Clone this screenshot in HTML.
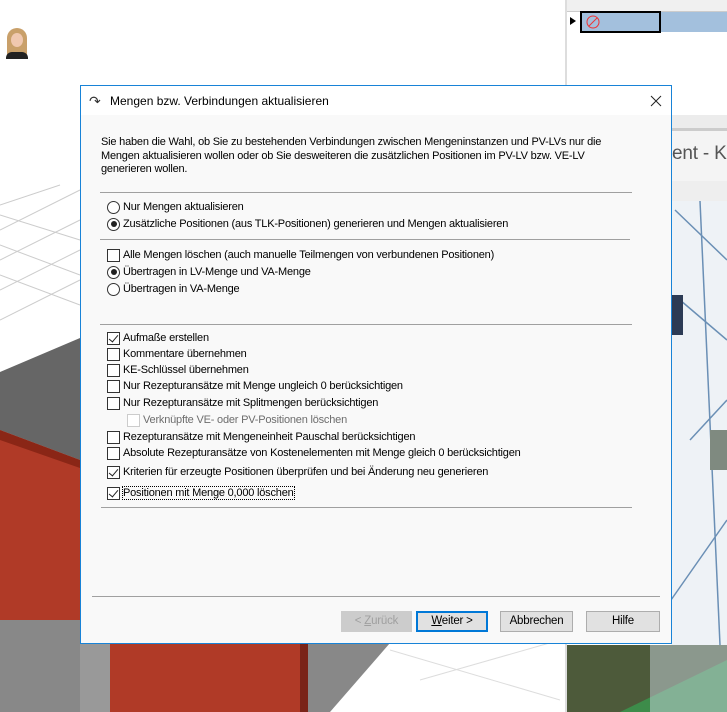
<!DOCTYPE html>
<html><head><meta charset="utf-8"><style>
*{margin:0;padding:0;box-sizing:border-box}
body{width:727px;height:712px;position:relative;overflow:hidden;background:#fff;font-family:"Liberation Sans",sans-serif;font-size:11px;letter-spacing:-0.2px;color:#000}
.a{position:absolute}
.sep{position:absolute;height:1px;background:#a0a0a0}
.row{position:absolute;left:107px;height:14px;display:flex;align-items:center;white-space:nowrap}
.cb{width:13px;height:13px;border:1px solid #333;background:#fff;margin-right:3px;position:relative;flex:none}
.cb.c::after{content:"";position:absolute;left:3px;top:0px;width:4px;height:8px;border:solid #222;border-width:0 1.5px 1.5px 0;transform:rotate(40deg)}
.rb{width:13px;height:13px;border:1px solid #333;border-radius:50%;background:#fff;margin-right:3px;position:relative;flex:none}
.rb.c::after{content:"";position:absolute;left:2.5px;top:2.5px;width:6px;height:6px;border-radius:50%;background:#222}
.btn{position:absolute;top:611px;height:21px;border:1px solid #adadad;background:#e1e1e1;text-align:center;line-height:19px;font-size:11.5px}
</style></head><body>
<svg class="a" style="left:0;top:0" width="727" height="712">
<g stroke="#ccc" stroke-width="1" fill="none">
<line x1="0" y1="230" x2="80" y2="190"/><line x1="0" y1="260" x2="80" y2="220"/><line x1="0" y1="290" x2="80" y2="250"/><line x1="0" y1="320" x2="80" y2="280"/>
<line x1="0" y1="215" x2="80" y2="240"/><line x1="0" y1="245" x2="80" y2="275"/><line x1="0" y1="275" x2="80" y2="305"/>
<line x1="0" y1="205" x2="60" y2="185"/>
</g>
<polygon points="0,372 80,338 80,460 0,430" fill="#666"/>
<polygon points="0,430 80,460 80,620 0,620" fill="#b03a27"/>
<polygon points="0,430 80,460 80,468 0,440" fill="#8a2616"/>
<polygon points="0,620 80,620 80,712 0,712" fill="#888"/>
<polygon points="80,640 300,640 300,712 80,712" fill="#b03a27"/>
<rect x="80" y="643" width="30" height="69" fill="#999"/>
<rect x="300" y="643" width="8" height="69" fill="#7a2418"/>
<polygon points="308,643 390,643 330,712 308,712" fill="#888"/>
<g stroke="#ddd"><line x1="390" y1="650" x2="560" y2="700"/><line x1="420" y1="680" x2="560" y2="640"/></g>
<rect x="565" y="0" width="2" height="712" fill="#ddd"/>
<rect x="567" y="0" width="160" height="12" fill="#f0f0f0"/>
<rect x="567" y="11" width="160" height="1" fill="#ccc"/>
<rect x="581" y="12" width="146" height="20" fill="#a3c0dd"/>
<rect x="581" y="12" width="79" height="20" fill="none" stroke="#000" stroke-width="2"/>
<circle cx="593" cy="22" r="6" fill="none" stroke="#e33" stroke-width="1"/>
<line x1="589" y1="26" x2="597" y2="18" stroke="#e33"/>
<polygon points="570,17 576,21 570,25" fill="#000"/>
<rect x="567" y="115" width="160" height="13" fill="#ececec"/>
<rect x="567" y="128" width="160" height="3" fill="#ccc"/>
<rect x="567" y="131" width="160" height="50" fill="#f4f4f4"/>
<text x="672" y="159" font-family="Liberation Sans" font-size="19" fill="#555">ent - Ko</text>
<rect x="567" y="181" width="160" height="20" fill="#eee"/>
<rect x="671" y="201" width="56" height="444" fill="#eef2f6"/>
<g stroke="#6a8fb5" stroke-width="1.5"><line x1="675" y1="210" x2="727" y2="260"/><line x1="680" y1="300" x2="727" y2="340"/><line x1="690" y1="440" x2="727" y2="400"/><line x1="671" y1="600" x2="727" y2="520"/><line x1="700" y1="201" x2="720" y2="645"/></g>
<rect x="671" y="295" width="12" height="40" fill="#2c3b55"/>
<rect x="710" y="430" width="17" height="40" fill="#7f8a80"/>
<rect x="567" y="645" width="160" height="67" fill="#4d5a3a"/>
<polygon points="620,712 727,660 727,712" fill="#3d8c4a"/>
<rect x="650" y="645" width="77" height="67" fill="#c9d6e0" opacity=".5"/>
</svg>
<div class="a" style="left:7px;top:28px;width:20px;height:30px;border-radius:10px 10px 4px 4px;background:#c9a06a"></div>
<div class="a" style="left:11px;top:33px;width:12px;height:14px;border-radius:50%;background:#f0c8b0"></div>
<div class="a" style="left:6px;top:52px;width:22px;height:7px;border-radius:6px 6px 0 0;background:#222"></div>
<div class="a" style="left:80px;top:85px;width:592px;height:559px;border:1px solid #1883d7;background:#f9f9f9"></div>
<div class="a" style="left:81px;top:86px;width:590px;height:29px;background:#fff"></div>
<div class="a" style="left:89px;top:93px;font-size:14px;color:#333">&#8631;</div>
<div class="a" style="left:110px;top:94px;font-size:12px;letter-spacing:0">Mengen bzw. Verbindungen aktualisieren</div>
<svg class="a" style="left:650px;top:95px" width="12" height="12"><path d="M1 1L11 11M11 1L1 11" stroke="#222" stroke-width="1"/></svg>
<div class="a" style="left:101px;top:136px;width:540px;line-height:13.5px">Sie haben die Wahl, ob Sie zu bestehenden Verbindungen zwischen Mengeninstanzen und PV-LVs nur die<br>Mengen aktualisieren wollen oder ob Sie desweiteren die zusätzlichen Positionen im PV-LV bzw. VE-LV<br>generieren wollen.</div>
<div class="sep" style="left:100px;top:192px;width:532px"></div>
<div class="row" style="top:200px"><span class="rb"></span>Nur Mengen aktualisieren</div>
<div class="row" style="top:217px"><span class="rb c"></span>Zusätzliche Positionen (aus TLK-Positionen) generieren und Mengen aktualisieren</div>
<div class="sep" style="left:100px;top:239px;width:530px"></div>
<div class="row" style="top:248px"><span class="cb"></span>Alle Mengen löschen (auch manuelle Teilmengen von verbundenen Positionen)</div>
<div class="row" style="top:265px"><span class="rb c"></span>Übertragen in LV-Menge und VA-Menge</div>
<div class="row" style="top:282px"><span class="rb"></span>Übertragen in VA-Menge</div>
<div class="sep" style="left:100px;top:324px;width:532px"></div>
<div class="row" style="top:331px"><span class="cb c"></span>Aufmaße erstellen</div>
<div class="row" style="top:347px"><span class="cb"></span>Kommentare übernehmen</div>
<div class="row" style="top:363px"><span class="cb"></span>KE-Schlüssel übernehmen</div>
<div class="row" style="top:379px"><span class="cb"></span>Nur Rezepturansätze mit Menge ungleich 0 berücksichtigen</div>
<div class="row" style="top:396px"><span class="cb"></span>Nur Rezepturansätze mit Splitmengen berücksichtigen</div>
<div class="row" style="top:413px;left:127px;color:#6d6d6d"><span class="cb" style="border-color:#ccc"></span>Verknüpfte VE- oder PV-Positionen löschen</div>
<div class="row" style="top:430px"><span class="cb"></span>Rezepturansätze mit Mengeneinheit Pauschal berücksichtigen</div>
<div class="row" style="top:446px"><span class="cb"></span>Absolute Rezepturansätze von Kostenelementen mit Menge gleich 0 berücksichtigen</div>
<div class="row" style="top:465px"><span class="cb c"></span>Kriterien für erzeugte Positionen überprüfen und bei Änderung neu generieren</div>
<div class="row" style="top:486px"><span class="cb c"></span><span style="outline:1px dotted #000">Positionen mit Menge 0,000 löschen</span></div>
<div class="sep" style="left:101px;top:507px;width:531px"></div>
<div class="sep" style="left:92px;top:596px;width:568px"></div>
<div class="btn" style="left:341px;width:71px;color:#a0a0a0;border-color:#ccc;background:#ccc">&lt; <u>Z</u>urück</div>
<div class="btn" style="left:416px;width:72px;border:2px solid #0078d7;line-height:17px"><u>W</u>eiter &gt;</div>
<div class="btn" style="left:500px;width:73px">Abbrechen</div>
<div class="btn" style="left:586px;width:74px">Hilfe</div>
</body></html>
